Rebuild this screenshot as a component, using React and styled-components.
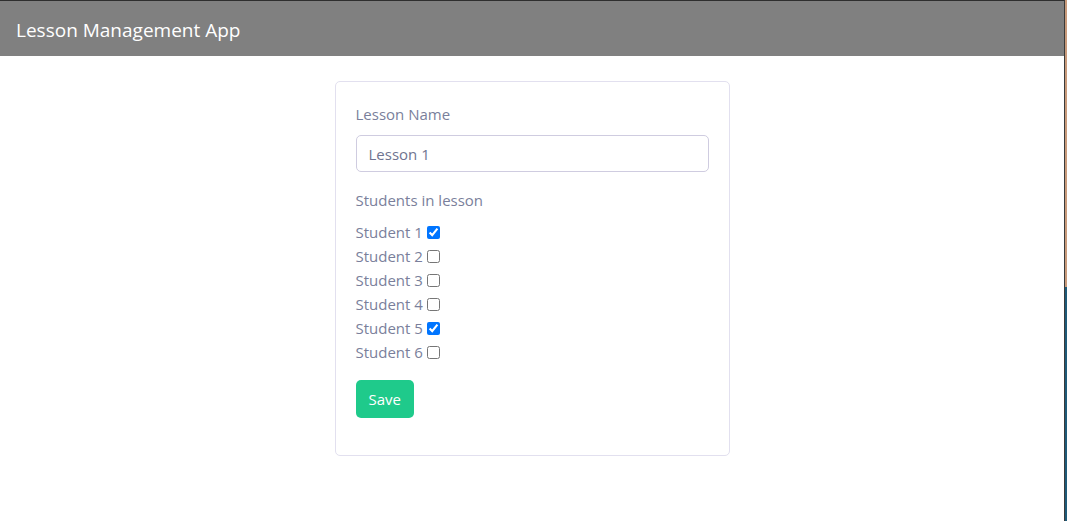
import styled, { createGlobalStyle } from 'styled-components';
import { useState } from 'react';

const GlobalStyle = createGlobalStyle`
  html, body {
    margin: 0;
    padding: 0;
    background: linear-gradient(#c89a7a 0 55%, #1f5a78 55% 100%);
  }
  body {
    font-family: "Open Sans", "Noto Sans", sans-serif;
  }
`;

const Frame = styled.div`
  width: 1065px;
  height: 521px;
  box-sizing: border-box;
  background: #fff;
  border-top: 1px solid #2e2e2e;
  border-right: 1px solid #3a3a3a;
`;

const Header = styled.header`
  height: 55px;
  background: #808080;
  display: flex;
  align-items: center;
  padding: 2px 0 0 16px;
  box-sizing: border-box;
  color: #fff;
  font-size: 19px;
`;

const Main = styled.main`
  display: flex;
  justify-content: center;
  padding-top: 25px;
`;

const Card = styled.form`
  width: 395px;
  box-sizing: border-box;
  border: 1px solid #e2e0ef;
  border-radius: 5px;
  padding: 20px 20px 37px;
  color: #7a7f9b;
  font-size: 15px;
`;

const Label = styled.div`
  line-height: 24px;
  margin-bottom: ${(p) => p.gap}px;
`;

const TextInput = styled.input`
  width: 100%;
  box-sizing: border-box;
  height: 37px;
  border: 1px solid #cfcce0;
  border-radius: 5px;
  padding: 1px 12px 0;
  font: inherit;
  font-size: 15px;
  color: #6f7490;
  outline: none;
  margin-bottom: 16px;
`;

const StudentList = styled.div`
  display: flex;
  flex-direction: column;
  margin-bottom: 16px;
`;

const StudentRow = styled.label`
  display: flex;
  align-items: center;
  height: 24px;
  gap: 4px;

  input {
    margin: 0;
    width: 13px;
    height: 13px;
  }
`;

const SaveButton = styled.button`
  background: #1fca8b;
  color: #fff;
  border: none;
  border-radius: 5px;
  height: 38px;
  padding: 0 13px;
  font: inherit;
  font-size: 15px;
  cursor: pointer;
`;

const initial = [true, false, false, false, true, false];

const App = () => {
  const [name, setName] = useState('Lesson 1');
  const [checked, setChecked] = useState(initial);

  const toggle = (i) => setChecked(checked.map((v, j) => (j === i ? !v : v)));

  return (
    <>
      <GlobalStyle />
      <Frame>
        <Header>Lesson Management App</Header>
        <Main>
          <Card onSubmit={(e) => e.preventDefault()}>
            <Label gap={9}>Lesson Name</Label>
            <TextInput value={name} onChange={(e) => setName(e.target.value)} />
            <Label gap={8}>Students in lesson</Label>
            <StudentList>
              {checked.map((v, i) => (
                <StudentRow key={i}>
                  Student {i + 1}
                  <input type="checkbox" checked={v} onChange={() => toggle(i)} />
                </StudentRow>
              ))}
            </StudentList>
            <SaveButton type="submit">Save</SaveButton>
          </Card>
        </Main>
      </Frame>
    </>
  );
};

export default App;
